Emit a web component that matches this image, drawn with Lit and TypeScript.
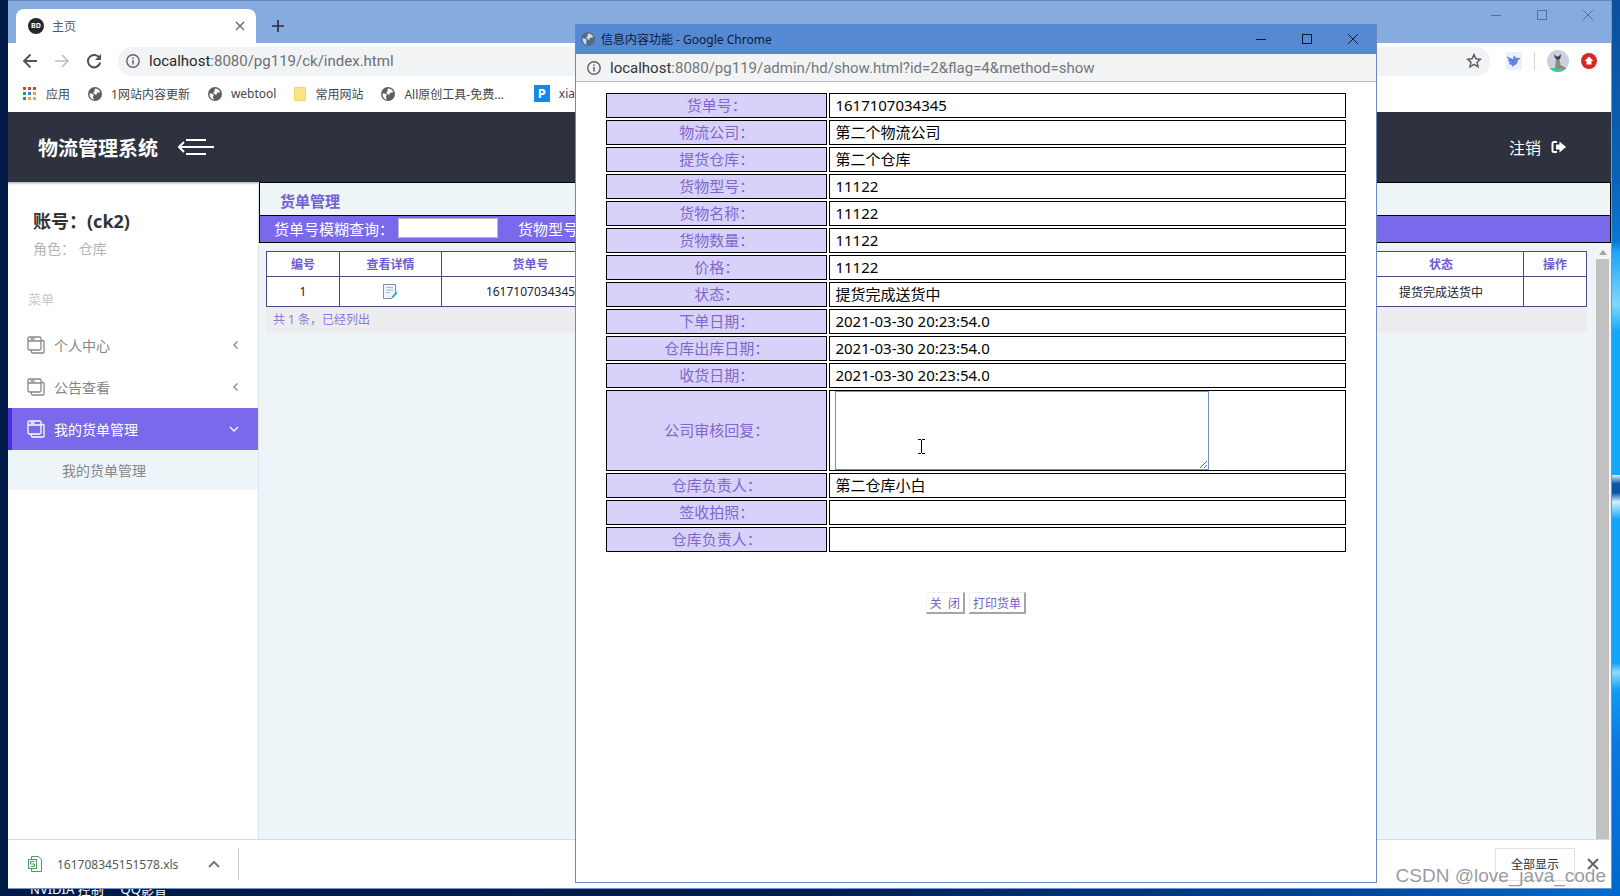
import { LitElement, html, svg, css } from "lit";
import { customElement } from "lit/decorators.js";

const globe = html`<svg width="14" height="14" viewBox="0 0 14 14"><circle cx="7" cy="7" r="7" fill="#5b5f63"/><path d="M1.6 6.2c2 .4 3.400 .3 4 1.600.5 1.200-1 1.600-.6 2.600.3.800.8 1 .8 2.200C3.400 12.200 1.400 9.800 1.600 6.200zM7 1.600c2.600 0 4.300 1.400 5.200 3.400-1 1-2.600.2-3.400 1-.8.700.6 1.300-.4 1.800-1.200.500-1.400-1-2.600-1.200-.9-.2-.6-1.300.2-1.700C7 4.300 6.200 3 7 1.600z" fill="#fff"/></svg>`;
const info = html`<svg width="14" height="14" viewBox="0 0 14 14" fill="none" stroke="#5f6368"><circle cx="7" cy="7" r="6.200" stroke-width="1.400"/><path d="M7 6v4.400M7 3.400v1.500" stroke-width="1.500"/></svg>`;
const pages = html`<svg width="18" height="18" viewBox="0 0 18 18" fill="none" stroke="currentColor" stroke-width="1.300"><rect x="1" y="1" width="13" height="13" rx="1.500"/><path d="M1 5h13M3.500 3h4M14 4.500h2a1 1 0 0 1 1 1V16a1 1 0 0 1-1 1H5.500a1 1 0 0 1-1-1v-2"/></svg>`;
const chevron = (d: string) => html`<svg width="10" height="10" viewBox="0 0 10 10" fill="none" stroke="currentColor" stroke-width="1.300"><path d=${d}/></svg>`;
const winButtons = () => html`
  <button aria-label="最小化"><svg width="12" height="12" viewBox="0 0 12 12"><path d="M1 6.500h10" stroke="currentColor"/></svg></button>
  <button aria-label="最大化"><svg width="12" height="12" viewBox="0 0 12 12"><rect x="1.500" y="1.500" width="9" height="9" fill="none" stroke="currentColor"/></svg></button>
  <button aria-label="关闭窗口"><svg width="12" height="12" viewBox="0 0 12 12"><path d="M1 1l10 10M11 1L1 11" stroke="currentColor"/></svg></button>`;

const base = css`
  :host, * { box-sizing: border-box; }
  button, input, textarea { font-family: inherit; margin: 0; }
  button { background: none; border: 0; padding: 0; color: inherit; font-size: 12px; display: flex; align-items: center; justify-content: center; }
  a { color: inherit; text-decoration: none; }
  svg { display: block; flex: none; }
`;

@customElement("detail-window")
class DetailWindow extends LitElement {
  static styles = [base, css`
    :host { display: flex; flex-direction: column; background: #fff; border: 1px solid #6d87c0; border-top-color: #5487d0; }
    .title { display: flex; align-items: center; height: 29px; flex: none; background: #5589d3; font-size: 12px; color: #0c1c38; padding: 0 0 2px 5px; }
    .title span { flex: 1; padding-left: 6px; }
    .title > svg { opacity: .7; }
    .title button { width: 46px; height: 27px; color: #0a1630; }
    .address { display: flex; align-items: center; gap: 9px; height: 28px; flex: none; background: #f1f3f4; border-bottom: 1px solid #b9bcbe; padding-left: 11px; font-family: Roboto, sans-serif; font-size: 15px; color: #73777b; white-space: nowrap; }
    .address b { font-weight: 400; color: #303337; }
    table { width: 93%; margin: 9px auto 0; border-collapse: separate; border-spacing: 2px; table-layout: fixed; font-size: 15px; line-height: 21px; }
    th, td { border: 1px solid #000; height: 25px; padding: 0 5px; }
    th { width: 30%; background: #d8d2fb; color: #7f67cb; font-weight: 400; }
    td { color: #000; }
    textarea { display: block; width: 74%; height: 79px; border: 1px solid #6f93c9; background: #fff; outline: 0; resize: both; }
    .actions { display: flex; justify-content: center; gap: 4px; margin-top: 38px; }
    .actions button { height: 22px; padding: 0 3px; color: #7460cc; background: #fff; border: 1px solid #f0f0f0; border-right: 2px solid #a5a5a5; border-bottom: 2px solid #a5a5a5; white-space: pre; }
  `];
  rows: [string, string][] = [
    ["货单号：", "1617107034345"], ["物流公司：", "第二个物流公司"], ["提货仓库：", "第二个仓库"],
    ["货物型号：", "11122"], ["货物名称：", "11122"], ["货物数量：", "11122"], ["价格：", "11122"],
    ["状态：", "提货完成送货中"], ["下单日期：", "2021-03-30 20:23:54.0"],
    ["仓库出库日期：", "2021-03-30 20:23:54.0"], ["收货日期：", "2021-03-30 20:23:54.0"],
    ["公司审核回复：", "*"], ["仓库负责人：", "第二仓库小白"], ["签收拍照：", ""], ["仓库负责人：", ""],
  ];
  render() {
    return html`
      <div class="title">${globe}<span>信息内容功能 - Google Chrome</span>${winButtons()}</div>
      <div class="address">${info}<span><b>localhost</b>:8080/pg119/admin/hd/show.html?id=2&amp;flag=4&amp;method=show</span></div>
      <table>
        ${this.rows.map(([k, v]) => v === "*"
          ? html`<tr><th><label for="reply">${k}</label></th><td><textarea id="reply"></textarea></td></tr>`
          : html`<tr><th>${k}</th><td>${v}</td></tr>`)}
      </table>
      <div class="actions"><button>关  闭</button><button>打印货单</button></div>`;
  }
}

@customElement("side-menu")
class SideMenu extends LitElement {
  static styles = [base, css`
    :host { display: flex; flex-direction: column; background: #fff; border-right: 1px solid #dde5ea; box-shadow: inset 0 3px 3px -2px #9a9da2; }
    .account { font-size: 18px; line-height: 24px; font-weight: 700; color: #333; padding: 27px 25px 0; }
    .role { font-size: 14px; line-height: 20px; color: #b4b4b4; padding: 6px 25px 0; white-space: pre; }
    .heading { font-size: 13px; line-height: 20px; color: #cacaca; padding: 30px 20px 15px; }
    .item { display: flex; align-items: center; gap: 9px; height: 42px; padding: 0 17px 0 19px; font-size: 14px; color: #85878a; }
    .item span { flex: 1; }
    .active { background: #7b69ec; color: #fff; border-left: 4px solid #4a2fdc; padding-left: 15px; padding-right: 19px; }
    .sub { display: flex; align-items: center; height: 40px; padding-left: 54px; background: #edf5f8; font-size: 14px; color: #85878a; }
  `];
  render() {
    return html`
      <div class="account">账号：(ck2)</div>
      <div class="role">角色： 仓库</div>
      <div class="heading">菜单</div>
      <a class="item" href="#">${pages}<span>个人中心</span>${chevron("M6.500 1.500L3 5l3.500 3.500")}</a>
      <a class="item" href="#">${pages}<span>公告查看</span>${chevron("M6.500 1.500L3 5l3.500 3.500")}</a>
      <a class="item active" href="#">${pages}<span>我的货单管理</span>${chevron("M1 3l4 4 4-4")}</a>
      <a class="sub" href="#">我的货单管理</a>`;
  }
}

@customElement("order-list")
class OrderList extends LitElement {
  static styles = [base, css`
    :host { display: flex; flex-direction: column; background: #edf5f8; min-width: 0; }
    .caption { height: 34px; border: 1px solid #000; background: #eef5f7; display: flex; align-items: center; padding: 2px 20px 0; font-size: 15px; font-weight: 700; color: #7361d8; }
    .search { height: 27px; border: 1px solid #000; border-top: 0; background: #7b69ec; color: #fff; display: flex; align-items: center; padding: 0 14px 2px; font-size: 15px; white-space: nowrap; }
    .search input { width: 100px; height: 20px; border: 1px solid #b9b9c6; background: #fff; margin: 0 20px 0 4px; }
    .scroller { flex: 1; display: flex; }
    .sheet { flex: 1; padding: 8px 8px 0 7px; min-width: 0; }
    table { width: 100%; border-collapse: collapse; table-layout: fixed; font-size: 12px; background: #fff; }
    th, td { border: 1px solid #4b4887; text-align: center; padding: 0; }
    th { height: 25px; color: #6f5bd3; font-weight: 700; }
    td { height: 30px; color: #222; }
    td svg { margin: auto; }
    .idx { width: 73px; } .view { width: 102px; } .num { width: 178px; } .state { width: 165px; } .op { width: 63px; }
    .total { background: #ededf0; height: 26px; line-height: 26px; font-size: 12px; color: #8b78d8; padding-left: 7px; }
    .bar { width: 16px; display: flex; flex-direction: column; align-items: center; padding: 7px 2px 0 1px; background: #f3f5f8; }
    .thumb { flex: 1; align-self: stretch; background: #c1c1c1; margin-top: 4px; }
  `];
  render() {
    return html`
      <div class="caption">货单管理</div>
      <div class="search"><label for="no">货单号模糊查询：</label><input id="no" type="text"><label for="model">货物型号：</label><input id="model" type="text"></div>
      <div class="scroller">
        <div class="sheet">
          <table>
            <tr><th class="idx">编号</th><th class="view">查看详情</th><th class="num">货单号</th><th></th><th class="state">状态</th><th class="op">操作</th></tr>
            <tr><td>1</td><td><svg width="17" height="17" viewBox="0 0 17 17"><path d="M1.500 1.500h12v9l-4 5h-8z" fill="#eef4fb" stroke="#7d8fae"/><path d="M4 4.500h7M4 7h7M4 9.500h4" stroke="#a9b8d2"/><path d="M15.500 10l-4 4.500-2 1 .7-2.200 3.800-4.500z" fill="#2fa3c4"/></svg></td><td>1617107034345</td><td></td><td>提货完成送货中</td><td></td></tr>
          </table>
          <div class="total">共 1 条，已经列出</div>
        </div>
        <div class="bar"><svg width="8" height="5" viewBox="0 0 8 5"><path d="M4 0l4 5H0z" fill="#a3a3a3"/></svg><div class="thumb"></div></div>
      </div>`;
  }
}

@customElement("app-root")
class AppRoot extends LitElement {
  static styles = [base, css`
    :host { display: flex; position: relative; overflow: hidden; height: 100vh; padding: 0 8px 7px; font-family: "Noto Sans", "Noto Sans CJK SC", sans-serif;
      background: linear-gradient(90deg, #001a47 0, #001c4c 50%, #00489c 85%, #006fd2 100%); }
    .rightglow { position: absolute; right: 0; top: 0; bottom: 0; width: 8px; background: linear-gradient(#0b4f9c 0, #0a63b8 20%, #0a78d6 27%, #1aa5f5 28%, #7fd8fb 34%, #12a9f8 37%, #12a9f8 53%, #e0f6fd 53%, #0b55a5 54%, #0b55a5 55%, #d0f2fd 56%, #12a4f8 58%, #12a4f8 74%, #8fdcff 75%, #0f9df3 77%, #0a78e0 83%, #0068cc 100%); }
    .taskbar { position: absolute; left: 30px; bottom: 0; height: 16px; font-size: 13px; line-height: 18px; color: #fff; white-space: pre; }
    .window { position: relative; flex: 1; min-width: 0; display: flex; flex-direction: column; border: 1px solid #7095cf; border-top-color: #6287bb; border-width: 1px 1px 1px 0; background: #fff; }
    .tabs { display: flex; height: 42px; flex: none; background: #86abdf; padding: 8px 0 0 8px; }
    .tab { display: flex; align-items: center; gap: 8px; width: 240px; background: #fff; border-radius: 8px 8px 0 0; padding: 0 11px 0 12px; font-size: 12px; color: #55585c; }
    .tab span { flex: 1; }
    .badge { width: 16px; height: 16px; border-radius: 8px; background: #24282e; color: #fff; font-size: 7px; line-height: 16px; text-align: center; font-weight: 700; }
    .plus { width: 44px; height: 34px; color: #2a2f36; }
    .winbtns { margin-left: auto; display: flex; margin-top: -8px; color: #4c70a8; }
    .winbtns button { width: 46px; height: 28px; }
    .toolbar { display: flex; align-items: center; height: 36px; flex: none; padding: 0 14px; gap: 16px; color: #4f5357; }
    .url { flex: 1; display: flex; align-items: center; gap: 9px; height: 29px; border-radius: 14px; background: #f1f3f4; padding: 0 8px; font-family: Roboto, sans-serif; font-size: 15px; color: #6c7074; }
    .url span { flex: 1; }
    .url b { font-weight: 400; color: #26292c; }
    .ext { display: flex; align-items: center; gap: 12px; }
    .sep { width: 1px; height: 18px; background: #d0d3d6; }
    .marks { display: flex; align-items: center; height: 33px; flex: none; padding: 0 0 4px 15px; gap: 18px; font-size: 12px; color: #44474a; white-space: nowrap; }
    .marks a { display: flex; align-items: center; gap: 9px; }
    .marks a:last-child { margin-left: 12px; }
    .p { width: 16px; height: 17px; background: #1389e8; color: #fff; font-size: 13px; line-height: 17px; text-align: center; font-weight: 700; }
    .folder { width: 12px; height: 14px; background: #fbe284; border: 1px solid #f0d472; border-radius: 1px; }
    .head { display: flex; align-items: center; height: 70px; flex: none; padding: 0 45px 0 30px; gap: 20px; background: #2d323e; color: #fff; }
    .head h1 { margin: 0; font-size: 20px; font-weight: 700; }
    .logout { margin-left: auto; display: flex; align-items: center; gap: 10px; font-size: 16px; }
    .body { flex: 1; display: grid; grid-template-columns: 251px 1fr; min-height: 0; }
    .downloads { display: flex; align-items: center; height: 49px; flex: none; border-top: 1px solid #d2dde6; padding: 0 12px 0 20px; font-size: 12px; color: #55585c; background: #fff; }
    .file { display: flex; align-items: center; gap: 14px; height: 32px; border-right: 1px solid #c9ccd0; padding-right: 18px; }
    .file button { width: 12px; margin-left: 16px; }
    .all { margin-left: auto; width: 80px; height: 33px; border: 1px solid #e3dfe2; color: #2c2f33; margin-right: 12px; }
    .popup { position: absolute; left: 575px; top: 24px; bottom: 13px; width: 802px; }
    .mark { position: absolute; right: 14px; bottom: 8px; font: 19px/24px "Liberation Sans", sans-serif; color: rgba(120, 120, 125, .75); }
    .cursor { position: absolute; left: 917px; top: 438px; }
  `];
  render() {
    return html`
      <div class="rightglow"></div>
      <div class="taskbar">NVIDIA 控制     QQ影音</div>
      <div class="window">
        <div class="tabs">
          <div class="tab"><div class="badge">BD</div><span>主页</span><button aria-label="关闭标签"><svg width="10" height="10" viewBox="0 0 10 10"><path d="M1 1l8 8M9 1L1 9" stroke="#5f6368" stroke-width="1.300"/></svg></button></div>
          <button class="plus" aria-label="新标签"><svg width="12" height="12" viewBox="0 0 12 12"><path d="M6 0v12M0 6h12" stroke="currentColor" stroke-width="1.600"/></svg></button>
          <div class="winbtns">${winButtons()}</div>
        </div>
        <div class="toolbar">
          <button aria-label="后退"><svg width="16" height="16" viewBox="0 0 16 16" fill="none" stroke="currentColor" stroke-width="1.800"><path d="M15 8H2M8.500 1.500L2 8l6.500 6.500"/></svg></button>
          <button aria-label="前进"><svg width="16" height="16" viewBox="0 0 16 16" fill="none" stroke="#bcbfc2" stroke-width="1.600"><path d="M1 8h13M8 2l6 6-6 6"/></svg></button>
          <button aria-label="刷新"><svg width="16" height="16" viewBox="0 0 16 16"><path d="M13.500 5A6.200 6.200 0 1 0 14.200 9.500" fill="none" stroke="currentColor" stroke-width="2"/><path d="M15 1v6H9z" fill="currentColor"/></svg></button>
          <div class="url">${info}<span><b>localhost</b>:8080/pg119/ck/index.html</span><svg width="16" height="16" viewBox="0 0 16 16"><path d="M8 1.500l1.900 4.300 4.600.4-3.500 3.100 1.100 4.600L8 11.400l-4.100 2.500L5 9.300 1.500 6.200l4.600-.4z" fill="none" stroke="#55595d" stroke-width="1.400"/></svg></div>
          <div class="ext">
            <svg width="16" height="18" viewBox="0 0 16 18"><rect width="16" height="18" fill="#eef1fc"/><path d="M1 4c2 2 4 2.500 6 3l1-4 2 3c1.500-.5 3-.5 5 .500l-3 1.500c0 3-2 5-4 5.500l-2 1.500 0-2C4 13 3 12 3 11l1.500 0C3 10 2 9 2 8l1.500.3C2 7 1 5.500 1 4z" fill="#6085e8"/></svg>
            <span class="sep"></span>
            <svg width="22" height="22" viewBox="0 0 22 22"><clipPath id="av"><circle cx="11" cy="11" r="11"/></clipPath><g clip-path="url(#av)"><rect width="22" height="22" fill="#cdd0df"/><path d="M0 18h22v4H0z" fill="#43c6a6"/><path d="M9 9h3.500l1 6 5 2.500v1.500H8z" fill="#8c8b7c"/><path d="M7 4l2.500 2.500h2L14 4l-.5 4L11 10 8 8z" fill="#3a3b40"/></g></svg>
            <svg width="16" height="16" viewBox="0 0 16 16"><circle cx="8" cy="8" r="8" fill="#d42a22"/><path d="M8 3.500L12.500 8H10.500v3.500h-5V8h-2z" fill="#fff"/></svg>
          </div>
        </div>
        <div class="marks">
          <a href="#"><svg width="14" height="14" viewBox="0 0 14 14">${[0, 5, 10].map((y, r) => [0, 5, 10].map((x, c) => svg`<rect x=${x} y=${y} width="3" height="3" fill=${[["#dd4238", "#dd4238", "#dd4238"], ["#2f9a55", "#3f7fe8", "#e9a932"], ["#2f9a55", "#e9a932", "#e9a932"]][r][c]}/>`))}</svg>应用</a>
          <a href="#">${globe}1网站内容更新</a>
          <a href="#">${globe}webtool</a>
          <a href="#"><span class="folder"></span>常用网站</a>
          <a href="#">${globe}All原创工具-免费...</a>
          <a href="#"><span class="p">P</span>xia</a>
        </div>
        <div class="head">
          <h1>物流管理系统</h1>
          <svg width="36" height="20" viewBox="0 0 36 20" fill="none" stroke="#fff" stroke-width="2"><path d="M8 3h20M1 10h35M8 17h20M6 5l-5 5 5 5"/></svg>
          <a class="logout" href="#">注销<svg width="15" height="14" viewBox="0 0 15 14"><path d="M6 2H3a1.500 1.500 0 0 0-1.500 1.500v7A1.500 1.500 0 0 0 3 12h3" fill="none" stroke="#fff" stroke-width="2"/><path d="M8.500 1.500L15 7l-6.500 5.500V9.500H5v-5h3.500z" fill="#fff"/></svg></a>
        </div>
        <div class="body"><side-menu></side-menu><order-list></order-list></div>
        <div class="downloads">
          <div class="file"><svg width="15" height="16" viewBox="0 0 15 16" fill="none" stroke="#4f9a62"><path d="M3.500 3V.500h7l3 3v12h-10V13"/><rect x=".500" y="3.500" width="8" height="9"/><path d="M6.500 5.500h-4v2.500h4v2.500h-4"/></svg><span>161708345151578.xls</span><button aria-label="更多"><svg width="12" height="8" viewBox="0 0 12 8"><path d="M1 7l5-5 5 5" fill="none" stroke="#777" stroke-width="2"/></svg></button></div>
          <button class="all">全部显示</button>
          <button aria-label="关闭下载栏"><svg width="12" height="12" viewBox="0 0 12 12"><path d="M1 1l10 10M11 1L1 11" stroke="#5f6368" stroke-width="2"/></svg></button>
        </div>
      </div>
      <detail-window class="popup"></detail-window>
      <svg class="cursor" width="9" height="17" viewBox="0 0 9 17"><path d="M1 1.500h3M5 1.500h3M4.500 2v13M1 15.500h3M5 15.500h3" stroke="#000" fill="none"/></svg>
      <div class="mark">CSDN @love_java_code</div>`;
  }
}
